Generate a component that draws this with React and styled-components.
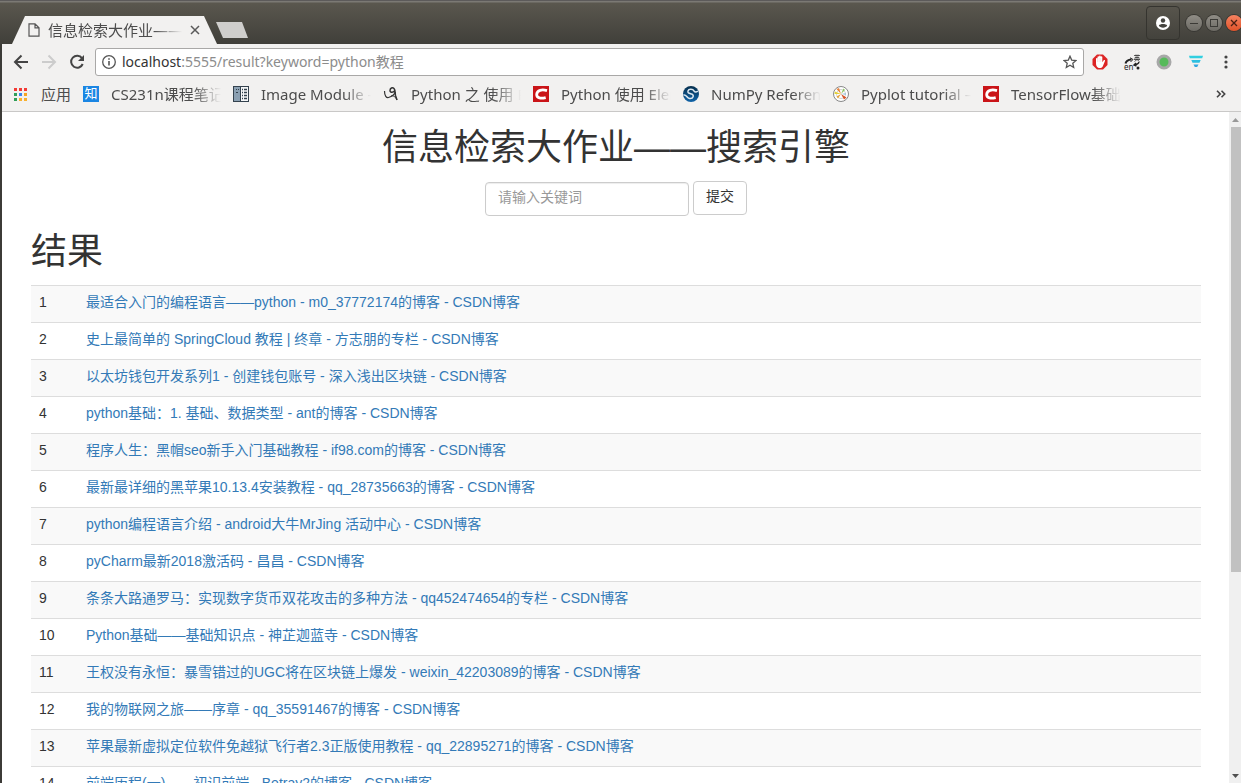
import { useState } from "react";
import styled, { createGlobalStyle, css } from "styled-components";

const results = [
  "最适合入门的编程语言——python - m0_37772174的博客 - CSDN博客",
  "史上最简单的 SpringCloud 教程 | 终章 - 方志朋的专栏 - CSDN博客",
  "以太坊钱包开发系列1 - 创建钱包账号 - 深入浅出区块链 - CSDN博客",
  "python基础：1. 基础、数据类型 - ant的博客 - CSDN博客",
  "程序人生：黑帽seo新手入门基础教程 - if98.com的博客 - CSDN博客",
  "最新最详细的黑苹果10.13.4安装教程 - qq_28735663的博客 - CSDN博客",
  "python编程语言介绍 - android大牛MrJing 活动中心 - CSDN博客",
  "pyCharm最新2018激活码 - 昌昌 - CSDN博客",
  "条条大路通罗马：实现数字货币双花攻击的多种方法 - qq452474654的专栏 - CSDN博客",
  "Python基础——基础知识点 - 神芷迦蓝寺 - CSDN博客",
  "王权没有永恒：暴雪错过的UGC将在区块链上爆发 - weixin_42203089的博客 - CSDN博客",
  "我的物联网之旅——序章 - qq_35591467的博客 - CSDN博客",
  "苹果最新虚拟定位软件免越狱飞行者2.3正版使用教程 - qq_22895271的博客 - CSDN博客",
  "前端历程(一)——初识前端 - Betray2的博客 - CSDN博客",
];

const ZhihuIcon = () => (
  <ZhihuBadge aria-hidden="true">知</ZhihuBadge>
);

const ImageModuleIcon = () => (
  <svg width="16" height="16" viewBox="0 0 16 16">
    <rect width="16" height="16" fill="#34424e" />
    <rect x="1" y="1" width="6" height="14" fill="#8ba0b2" />
    <path d="M3 3.500h1M5 3.500h1M3 6.500h2" stroke="#34424e" />
    <rect x="8" y="1" width="7" height="14" fill="#f4f6f7" />
    <path d="M9 3.500h1M11 3.500h3M9 6.500h1M11 6.500h3M9 9.500h1M11 9.500h3M9 12.500h1M11 12.500h3" stroke="#34424e" strokeWidth="1.500" />
  </svg>
);

const ScribbleIcon = () => (
  <svg width="16" height="16" viewBox="0 0 16 16" fill="none" stroke="#333">
    <path d="M1.500 5c0 5 2 7 4 6.500 3-1 6-3 7-5.500" strokeWidth="1.200" />
    <path d="M12 4c-1 3-5 3-5 .5S9.500 1 11 2.500c1.500 1.500 1 5 1.500 7L14 14" strokeWidth="1.500" />
    <path d="M8 10c2-.5 4 0 6 4" strokeWidth="1" />
  </svg>
);

const CsdnIcon = () => (
  <svg width="16" height="16" viewBox="0 0 16 16">
    <rect width="16" height="16" fill="#ca1418" />
    <path d="M14 4.600C9 3.200 4 4 3.700 8.400c-.2 4 4.300 4.300 9 3.200" fill="none" stroke="#fff" strokeWidth="2.800" />
  </svg>
);

const ScipyIcon = () => (
  <svg width="16" height="16" viewBox="0 0 16 16">
    <defs>
      <linearGradient id="scipy" x1="0" y1="0" x2="0" y2="1">
        <stop offset="0" stopColor="#062f4d" />
        <stop offset="1" stopColor="#1063a8" />
      </linearGradient>
    </defs>
    <circle cx="8" cy="8" r="8" fill="url(#scipy)" />
    <path d="M.5 9c3-1 3 3 6 3.500 4 .5 5-3.500 2-4.500-3-.800-4-1-3.500-3 .7-2.500 5-2 6 0 1 1.500 3 1 4 0" fill="none" stroke="#dce8f1" strokeWidth="1.500" />
  </svg>
);

const PyplotIcon = () => (
  <svg width="16" height="16" viewBox="0 0 16 16">
    <circle cx="8" cy="8" r="7.500" fill="#fff" stroke="#888" />
    <circle cx="8" cy="8" r="4.500" fill="none" stroke="#bbb" strokeWidth=".7" />
    <path d="M8 8L1.500 8 2 5.500z" fill="#e4d13a" />
    <path d="M8 8L3.500 3 6 2z" fill="#e8823c" />
    <path d="M8 8l2.500-5.500 1.500 1.500z" fill="#89c35c" />
    <path d="M8 8l5.500 3.500-2.500 2z" fill="#d8572a" />
    <path d="M8 8l-3 4.500-1.500-2z" fill="#e8a33c" />
    <path d="M8 8l5-1v2z" fill="#a4c7dd" />
  </svg>
);

const AppsIcon = () => {
  const colors = ["#f33b35", "#f33b35", "#f33b35", "#2f9e58", "#3b86ef", "#f5a623", "#2f9e58", "#f8b12f", "#f8b12f"];
  return (
    <svg width="13" height="13" viewBox="0 0 13 13">
      {colors.map((fill, i) => (
        <rect key={i} x={(i % 3) * 5} y={Math.floor(i / 3) * 5} width="3" height="3" fill={fill} />
      ))}
    </svg>
  );
};

const bookmarks = [
  { label: "CS231n课程笔记", Icon: ZhihuIcon },
  { label: "Image Module –", Icon: ImageModuleIcon },
  { label: "Python 之 使用 P", Icon: ScribbleIcon },
  { label: "Python 使用 Eler", Icon: CsdnIcon },
  { label: "NumPy Referen", Icon: ScipyIcon },
  { label: "Pyplot tutorial –", Icon: PyplotIcon },
  { label: "TensorFlow基础", Icon: CsdnIcon },
];

const TitleBar = () => (
  <TitleStrip>
    <Tab>
      <svg width="12" height="14" viewBox="0 0 12 14" fill="none" stroke="#555" strokeWidth="1.200">
        <path d="M1 .8h6l4 4v8.400H1zM7 .8v4h4" />
      </svg>
      <TabTitle>信息检索大作业——</TabTitle>
      <IconButton aria-label="Close tab" $size={10}>
        <svg width="10" height="10" viewBox="0 0 10 10" stroke="#5a5a5a" strokeWidth="1.500">
          <path d="M1 1l8 8M9 1L1 9" />
        </svg>
      </IconButton>
    </Tab>
    <NewTab aria-label="New tab" />
    <WindowControls>
      <ProfileButton aria-label="Profile">
        <svg width="14" height="14" viewBox="0 0 14 14">
          <circle cx="7" cy="7" r="7" fill="#fff" />
          <circle cx="7" cy="4.500" r="2.200" fill="#45443f" />
          <path d="M2.800 9.600C4 7.600 10 7.600 11.200 9.600 10 12.400 4 12.400 2.800 9.600z" fill="#45443f" />
        </svg>
      </ProfileButton>
      <WindowButton aria-label="Minimize">
        <svg width="16" height="16" stroke="#3b3a36"><path d="M4 8.500h8" /></svg>
      </WindowButton>
      <WindowButton aria-label="Maximize">
        <svg width="16" height="16" stroke="#3b3a36" fill="none"><rect x="4.500" y="4.500" width="7" height="7" /></svg>
      </WindowButton>
      <WindowButton aria-label="Close" $close>
        <svg width="16" height="16" stroke="#4a2014" strokeWidth="1.300"><path d="M5 5l6 6M11 5l-6 6" /></svg>
      </WindowButton>
    </WindowControls>
  </TitleStrip>
);

const Toolbar = () => (
  <ToolbarRow>
    <IconButton aria-label="Back" $size={16}>
      <svg width="16" height="16" viewBox="0 0 16 16" fill="none" stroke="#444" strokeWidth="2">
        <path d="M15 8H2.500M8.500 1.500L2 8l6.500 6.500" />
      </svg>
    </IconButton>
    <IconButton aria-label="Forward" $size={16} disabled>
      <svg width="16" height="16" viewBox="0 0 16 16" fill="none" stroke="#ccc" strokeWidth="2">
        <path d="M1 8h12.500M7.500 1.500L14 8l-6.500 6.500" />
      </svg>
    </IconButton>
    <IconButton aria-label="Reload" $size={16}>
      <svg width="16" height="16" viewBox="0 0 16 16">
        <path d="M13 4.200A6 6 0 1 0 13.700 10" fill="none" stroke="#444" strokeWidth="2" />
        <path d="M15 1v6H9z" fill="#444" />
      </svg>
    </IconButton>
    <Omnibox>
      <svg width="14" height="14" viewBox="0 0 14 14" fill="none" stroke="#555">
        <circle cx="7" cy="7" r="6.300" strokeWidth="1.300" />
        <path d="M7 6v4.500M7 3.200v1.600" strokeWidth="1.600" />
      </svg>
      <Address href="#result"><b>localhost</b>:5555/result?keyword=python教程</Address>
      <IconButton aria-label="Bookmark this page" $size={14}>
        <svg width="14" height="14" viewBox="0 0 14 14" fill="none" stroke="#555" strokeWidth="1.300">
          <path d="M7 1.200l1.700 3.900 4.300.4-3.200 2.800.9 4.200L7 10.300l-3.700 2.200.9-4.200L1 5.500l4.300-.4z" />
        </svg>
      </IconButton>
    </Omnibox>
    <Extensions>
      <IconButton aria-label="AdBlock" $size={16}>
        <svg width="16" height="16" viewBox="0 0 16 16">
          <path d="M5 .5h6L15.500 5v6L11 15.500H5L.5 11V5z" fill="#dc2424" />
          <path d="M4 8.500V4.700c0-1 1.500-1 1.500 0V3c0-1.100 1.600-1.100 1.600 0v-.7c0-1.100 1.600-1.100 1.600 0V3c0-1.100 1.600-1.100 1.600 0v5.200l1.400-1.900c.7-.7 1.700-.1 1.200.9L10.700 12.500c-1.200 2-4.500 2-5.700.3C4 11.500 4 10 4 8.500z" fill="#fff" />
          <path d="M5.500 5v3M7.100 4v4M8.700 4v4" stroke="#eaa" strokeWidth=".3" />
        </svg>
      </IconButton>
      <IconButton aria-label="Translate" $size={16}>
        <TranslateMark>
          <svg width="16" height="16" viewBox="0 0 16 16" fill="none" stroke="#222">
            <path d="M1.500 9.500C2 7 4 5.800 7.500 5.500" strokeWidth="2" />
            <path d="M6 3.800L9 5.500 6.500 8" strokeWidth="1" />
            <path d="M15 8c-.5 2-2 2.600-5 3M12 9l-2 2 2.500 1" strokeWidth="1.400" />
            <path d="M10 1.500h6M12 .5v2M14 .5v2M11 5.500v-2h4v2M10 5.500h6M13 2.500v3l-2.500 2M13 5.500l2.500 2" strokeWidth=".7" />
            <circle cx="14" cy="14" r="1.500" fill="#222" stroke="none" />
          </svg>
          <span>en</span>
        </TranslateMark>
      </IconButton>
      <IconButton aria-label="Proxy" $size={16}>
        <svg width="16" height="16" viewBox="0 0 16 16">
          <circle cx="8" cy="8" r="6" fill="#56ba5a" stroke="#a8a8a8" strokeWidth="3" />
        </svg>
      </IconButton>
      <IconButton aria-label="Filter" $size={16}>
        <svg width="16" height="16" viewBox="0 0 16 16">
          <path d="M1 1.700h14L14.200 4.300H1.800z" fill="#32cfe0" />
          <path d="M3.300 6h9.400l-1.200 2.800h-7z" fill="#2dbfe0" />
          <path d="M5.500 10.500h5L9.200 13H6.800z" fill="#30a7e0" />
        </svg>
      </IconButton>
      <IconButton aria-label="Menu" $size={12}>
        <svg width="4" height="14" viewBox="0 0 4 14" fill="#444">
          <circle cx="2" cy="2" r="1.600" />
          <circle cx="2" cy="7" r="1.600" />
          <circle cx="2" cy="12" r="1.600" />
        </svg>
      </IconButton>
    </Extensions>
  </ToolbarRow>
);

const BookmarksBar = () => (
  <BookmarksRow>
    <AppsLink href="#apps">
      <AppsIcon />
      应用
    </AppsLink>
    {bookmarks.map(({ label, Icon }) => (
      <Bookmark key={label} href="#bookmark">
        <Icon />
        <BookmarkLabel>{label}</BookmarkLabel>
      </Bookmark>
    ))}
    <MoreButton aria-label="More bookmarks">
      <svg width="10" height="8" viewBox="0 0 10 8" fill="none" stroke="#444" strokeWidth="1.600">
        <path d="M1 .8L4.200 4 1 7.200M5.500 .8L8.700 4 5.500 7.200" />
      </svg>
    </MoreButton>
  </BookmarksRow>
);

const App = () => {
  const [keyword, setKeyword] = useState("");

  return (
    <Window>
      <GlobalStyle />
      <TitleBar />
      <Frame>
        <Toolbar />
        <BookmarksBar />
        <Viewport>
          <Page>
            <Container>
              <Heading $center>信息检索大作业——搜索引擎</Heading>
              <SearchForm onSubmit={(e) => e.preventDefault()}>
                <SearchInput
                  type="text"
                  aria-label="请输入关键词"
                  placeholder="请输入关键词"
                  value={keyword}
                  onChange={(e) => setKeyword(e.target.value)}
                />
                <SubmitButton type="submit">提交</SubmitButton>
              </SearchForm>
              <Heading>结果</Heading>
              <ResultTable>
                <tbody>
                  {results.map((title, index) => (
                    <tr key={title}>
                      <NumberCell>{index + 1}</NumberCell>
                      <Cell>
                        <a href="#article">{title}</a>
                      </Cell>
                    </tr>
                  ))}
                </tbody>
              </ResultTable>
            </Container>
          </Page>
          <Scrollbar aria-hidden="true">
            <svg width="12" height="15"><path d="M3 10l3.500-4 3.500 4z" fill="#999" /></svg>
            <Thumb />
            <TrackRest />
            <svg width="12" height="15"><path d="M3 6l3.500 4L10 6z" fill="#505050" /></svg>
          </Scrollbar>
        </Viewport>
      </Frame>
    </Window>
  );
};

const uiFont = css`
  font-family: "Noto Sans", "Noto Sans CJK SC", sans-serif;
`;

const pageFont = css`
  font-family: "Liberation Sans", "Noto Sans CJK SC", sans-serif;
`;

const fadeOut = css`
  overflow: hidden;
  white-space: nowrap;
  mask-image: linear-gradient(to right, #000 calc(100% - 28px), transparent);
`;

const GlobalStyle = createGlobalStyle`
  * {
    box-sizing: border-box;
  }

  body {
    margin: 0;
  }

  svg {
    flex: none;
    display: block;
  }

  button {
    padding: 0;
    border: 0;
    background: none;
  }
`;

const Window = styled.div`
  display: flex;
  flex-direction: column;
  height: 100vh;
  overflow: hidden;
  background: #3c3b37;
  ${uiFont}
`;

const TitleStrip = styled.header`
  display: flex;
  align-items: flex-end;
  flex: none;
  height: 44px;
  padding-left: 12px;
  border-top: 1px solid #5c5a5a;
  background: linear-gradient(#7b7974 0, #7b7974 1px, #5a574e 2px, #403f3a);
`;

const Tab = styled.div`
  display: flex;
  align-items: center;
  width: 205px;
  height: 28px;
  padding: 0 17px 0 16px;
  background: #f2f1f0;
  clip-path: polygon(0 100%, 13px 0, calc(100% - 13px) 0, 100% 100%);
`;

const TabTitle = styled.span`
  flex: 1;
  margin: 0 8px;
  color: #4c4c4c;
  font-size: 15px;
  line-height: 24px;
  ${fadeOut}
`;

const NewTab = styled.button`
  align-self: flex-end;
  width: 32px;
  height: 16px;
  margin: 0 0 6px -1px;
  background: #cfcecc;
  clip-path: polygon(0 0, 26px 0, 100% 100%, 7px 100%);
`;

const WindowControls = styled.div`
  display: flex;
  align-items: center;
  gap: 4px;
  height: 42px;
  margin-left: auto;
`;

const IconButton = styled.button`
  display: flex;
  align-items: center;
  justify-content: center;
  flex: none;
  width: ${({ $size }) => $size}px;
  height: ${({ $size }) => $size}px;
`;

const ProfileButton = styled.button`
  display: flex;
  align-items: center;
  justify-content: center;
  width: 34px;
  height: 34px;
  margin-right: 2px;
  border: 1px solid #35342f;
  border-radius: 4px;
`;

const WindowButton = styled.button`
  display: flex;
  align-items: center;
  justify-content: center;
  width: 16px;
  height: 16px;
  border-radius: 50%;
  box-shadow: 0 0 0 1px #383733;
  background: ${({ $close }) =>
    $close ? "linear-gradient(#f58260, #e0532a)" : "linear-gradient(#908d86, #6c6a64)"};

  &:last-child {
    margin-right: -1px;
  }
`;

const Frame = styled.div`
  display: flex;
  flex-direction: column;
  flex: 1;
  min-height: 0;
  margin-left: 2px;
  background: #f2f1f0;
`;

const ToolbarRow = styled.nav`
  display: flex;
  align-items: center;
  gap: 12px;
  flex: none;
  height: 36px;
  padding: 0 9px 0 11px;
`;

const Omnibox = styled.div`
  display: flex;
  align-items: center;
  gap: 6px;
  flex: 1;
  height: 28px;
  margin-left: -2px;
  padding: 0 6px;
  border: 1px solid #a9a8a7;
  border-radius: 3px;
  background: #fff;
`;

const Address = styled.a`
  flex: 1;
  color: #8c8c8c;
  font-size: 14px;
  line-height: 20px;
  text-decoration: none;

  b {
    color: #333;
    font-weight: 400;
  }
`;

const Extensions = styled.div`
  display: flex;
  align-items: center;
  gap: 16px;
  margin-left: -4px;
`;

const TranslateMark = styled.span`
  position: relative;

  span {
    position: absolute;
    left: 0;
    bottom: -1px;
    color: #222;
    font-size: 8px;
    line-height: 8px;
    ${uiFont}
  }
`;

const BookmarksRow = styled.nav`
  display: flex;
  align-items: center;
  flex: none;
  height: 32px;
  padding: 0 15px 3px 12px;
  border-bottom: 1px solid #c9c8c7;
  color: #4c4c4c;
  font-size: 15px;
  line-height: 24px;
`;

const AppsLink = styled.a`
  display: flex;
  align-items: center;
  gap: 14px;
  width: 69px;
  color: inherit;
  text-decoration: none;
`;

const Bookmark = styled.a`
  display: flex;
  align-items: center;
  gap: 12px;
  width: 150px;
  padding-right: 12px;
  color: inherit;
  text-decoration: none;
`;

const BookmarkLabel = styled.span`
  flex: 1;
  min-width: 0;
  ${fadeOut}
`;

const ZhihuBadge = styled.span`
  flex: none;
  width: 16px;
  height: 16px;
  background: #1b86e3;
  color: #fff;
  font-size: 13px;
  line-height: 15px;
  text-align: center;
`;

const MoreButton = styled.button`
  margin-left: auto;
`;

const Viewport = styled.div`
  display: flex;
  flex: 1;
  min-height: 0;
  background: #fff;
`;

const Page = styled.main`
  flex: 1;
  overflow: hidden;
  padding-left: 1px;
  color: #333;
  font-size: 14px;
  line-height: 20px;
  ${pageFont}
`;

const Container = styled.div`
  max-width: 1170px;
  margin: 0 auto;
`;

const Heading = styled.h1`
  margin: 0;
  padding: 16px 0 13px;
  font-size: 36px;
  font-weight: 400;
  line-height: 40px;
  text-align: ${({ $center }) => ($center ? "center" : "left")};
`;

const SearchForm = styled.form`
  display: flex;
  justify-content: center;
  gap: 4px;
`;

const fieldText = css`
  color: #333;
  font-size: 14px;
  line-height: 20px;
  ${pageFont}
`;

const SearchInput = styled.input`
  width: 204px;
  height: 34px;
  margin-top: 1px;
  padding: 4px 12px 8px;
  border: 1px solid #ccc;
  border-radius: 4px;
  box-shadow: inset 0 1px 1px rgba(0, 0, 0, 0.075);
  ${fieldText}

  &::placeholder {
    color: #999;
  }
`;

const SubmitButton = styled.button`
  height: 34px;
  padding: 4px 12px 8px;
  border: 1px solid #ccc;
  border-radius: 4px;
  background: #fff;
  ${fieldText}
`;

const ResultTable = styled.table`
  width: 100%;
  border-collapse: collapse;

  tr:nth-child(odd) {
    background: #f9f9f9;
  }
`;

const Cell = styled.td`
  height: 37px;
  padding: 6px 8px 10px;
  border-top: 1px solid #ddd;
  vertical-align: top;

  a {
    color: #337ab7;
    text-decoration: none;
  }
`;

const NumberCell = styled(Cell)`
  width: 47px;
`;

const Scrollbar = styled.div`
  display: flex;
  flex-direction: column;
  flex: none;
  width: 12px;
  background: #f0f0f0;
`;

const Thumb = styled.div`
  flex: 445;
  margin-left: 2px;
  background: #c1c1c1;
`;

const TrackRest = styled.div`
  flex: 196;
`;

export default App;
